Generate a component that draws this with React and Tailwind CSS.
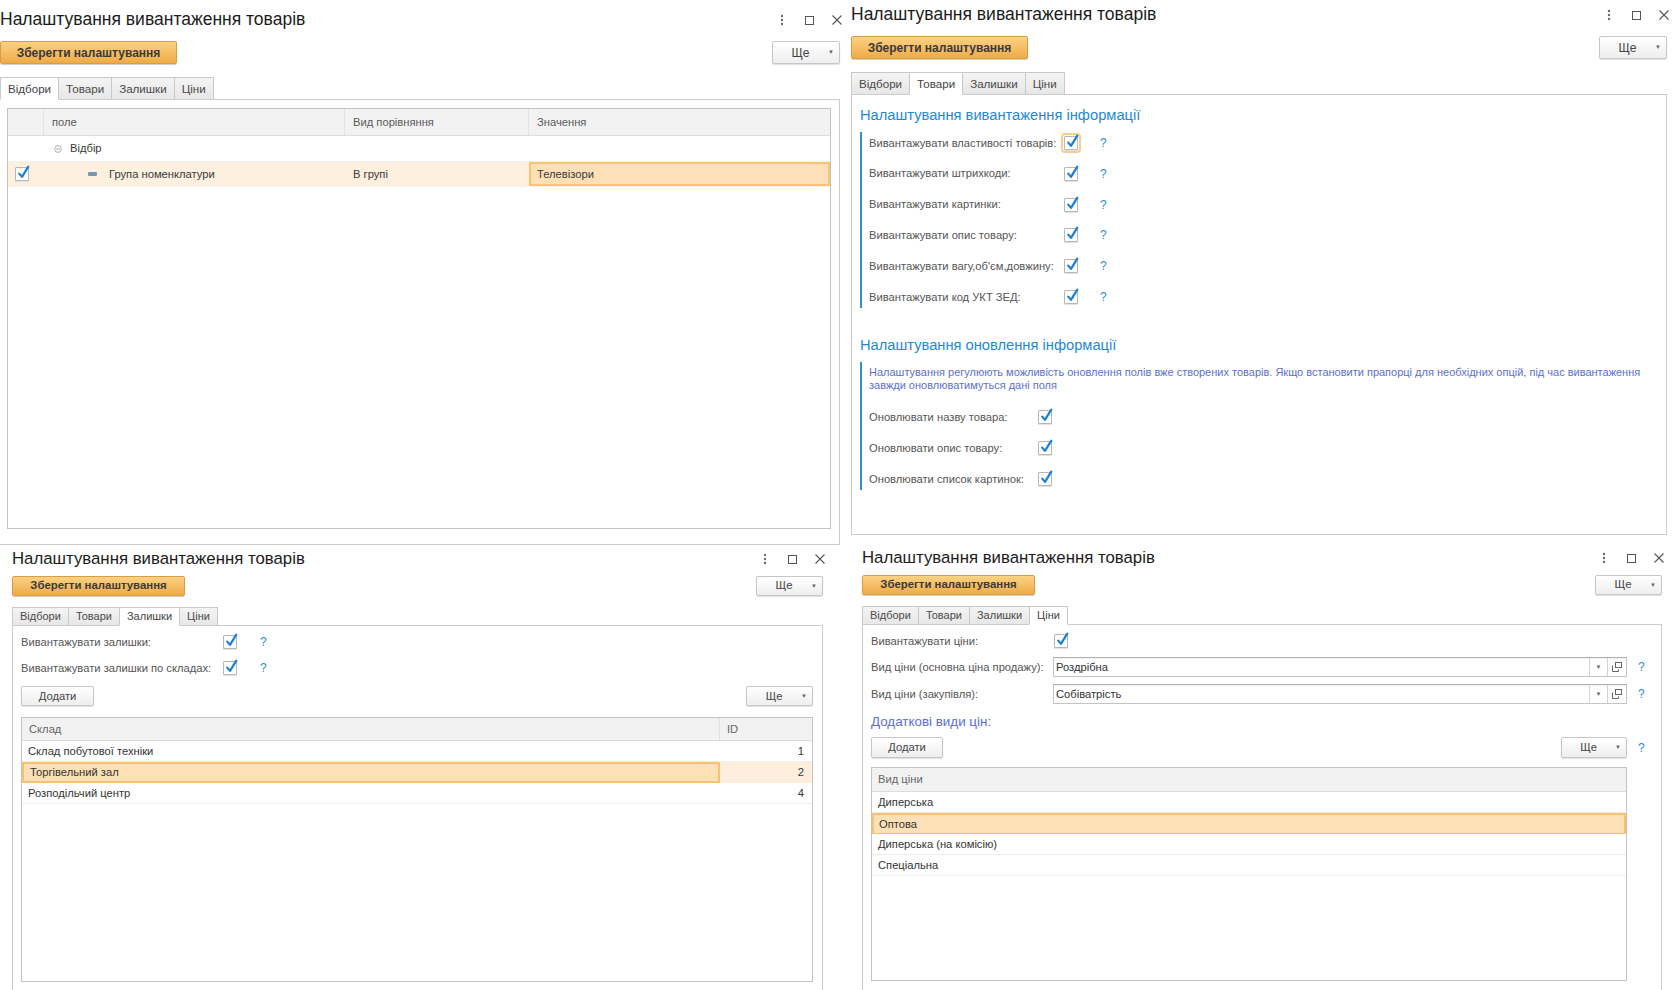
import React from "react";

const TABS = ["Відбори", "Товари", "Залишки", "Ціни"];

function WindowIcons() {
  return (
    <div className="-mr-[2px] flex items-center">
      <svg width="4" height="12" viewBox="0 0 4 12">
        <circle cx="2" cy="2" r="1.2" fill="#6a6a6a" />
        <circle cx="2" cy="6" r="1.2" fill="#6a6a6a" />
        <circle cx="2" cy="10" r="1.2" fill="#6a6a6a" />
      </svg>
      <svg className="ml-[21px]" width="9" height="9" viewBox="0 0 9 9">
        <rect x="0.5" y="0.5" width="8" height="8" fill="none" stroke="#555" />
      </svg>
      <svg className="ml-[18px]" width="10" height="10" viewBox="0 0 10 10">
        <path d="M0.5 0.5L9.5 9.5M9.5 0.5L0.5 9.5" stroke="#555" strokeWidth="1.1" />
      </svg>
    </div>
  );
}

function Check({ focus }) {
  return (
    <span
      className={`relative inline-block h-[14px] w-[14px] shrink-0 rounded-[1px] border border-[#b7b7b7] bg-white shadow-[0_1px_0_#e2e2e2] ${
        focus ? "outline-2 outline-offset-1 outline-[#f5cd8c] outline-solid" : ""
      }`}
    >
      <svg className="absolute left-[1px] top-[-3px]" width="13" height="15" viewBox="0 0 13 15">
        <path
          d="M2.2 8.6L5 11.8L11.3 1.6"
          fill="none"
          stroke="#1b80d3"
          strokeWidth="2.2"
          strokeLinecap="round"
          strokeLinejoin="round"
        />
      </svg>
    </span>
  );
}

function Help({ className = "" }) {
  return <span className={`text-[12px] text-[#2b8bd8] ${className}`}>?</span>;
}

function GrayButton({ children, className = "" }) {
  return (
    <button
      className={`flex items-center justify-center rounded-[2px] border border-[#c6c6c6] bg-linear-to-b from-white to-[#eeeeee] text-[#444] shadow-[0_1px_1px_rgba(0,0,0,0.12)] ${className}`}
    >
      {children}
    </button>
  );
}

function MoreButton({ className = "" }) {
  return (
    <GrayButton className={`pr-[5px] ${className}`}>
      <span className="flex-1 text-center">Ще</span>
      <span className="text-[6px] text-[#666]">▼</span>
    </GrayButton>
  );
}

function Header({ small, active }) {
  return (
    <>
      <div className="flex h-[24px] shrink-0 items-center justify-between">
        <h1 className={`${small ? "text-[16.8px]" : "text-[17.5px]"} font-normal leading-none text-[#1c1c1c]`}>
          Налаштування вивантаження товарів
        </h1>
        <WindowIcons />
      </div>
      <div className={`flex shrink-0 items-center justify-between ${small ? "mt-[5px] h-[20px]" : "mt-[9px] h-[23px]"}`}>
        <button
          className={`h-full rounded-[2px] border border-[#d99d45] bg-linear-to-b from-[#fbd283] to-[#efab46] font-bold text-[#3a3a3a] shadow-[0_1px_1px_rgba(0,0,0,0.2)] ${
            small ? "w-[173px] text-[11.4px]" : "w-[177px] text-[12px]"
          }`}
        >
          Зберегти налаштування
        </button>
        <MoreButton className={small ? "h-full w-[67px] text-[11.4px]" : "h-full w-[68px] text-[12px]"} />
      </div>
      <div className={`flex shrink-0 items-end ${small ? "mt-[10px] h-[19px]" : "mt-[12px] h-[23px]"}`}>
        {TABS.map((t, i) => (
          <div
            key={t}
            className={`-mb-px flex h-full items-center border border-[#c9c9c9] ${i > 0 ? "-ml-px" : ""} ${
              small ? "px-[7px] text-[11px]" : "px-[7px] text-[11.6px]"
            } ${
              i === active
                ? "relative z-10 border-b-white bg-white text-[#444]"
                : "bg-linear-to-b from-[#f4f4f4] to-[#e7e7e7] text-[#4a4a4a]"
            }`}
          >
            {t}
          </div>
        ))}
      </div>
    </>
  );
}

function CircleMinus() {
  return (
    <svg width="8" height="8" viewBox="0 0 8 8">
      <circle cx="4" cy="4" r="3.4" fill="none" stroke="#a5a5a5" strokeWidth="0.9" />
      <path d="M2 4H6" stroke="#a5a5a5" strokeWidth="0.9" />
    </svg>
  );
}

function FiltersPanel() {
  return (
    <div className="flex flex-col pr-[10px] pt-[8px]">
      <Header active={0} />
      <div className="flex-1 border-t border-r border-b border-[#cccccc] pt-[8px] pl-[7px] pr-[8px] pb-[15px]">
        <div className="h-full border border-[#c2c2c2] text-[11.2px] text-[#3a3a3a]">
          <div className="grid h-[27px] grid-cols-[36px_301px_184px_1fr] border-b border-[#dddddd] bg-[#f2f2f2] text-[#5a5a5a]">
            <div className="border-r border-[#e2e2e2]" />
            <div className="flex items-center border-r border-[#e2e2e2] pl-[8px]">поле</div>
            <div className="flex items-center border-r border-[#e2e2e2] pl-[8px]">Вид порівняння</div>
            <div className="flex items-center pl-[8px]">Значення</div>
          </div>
          <div className="flex h-[26px] items-center border-b border-[#f0f0f0] pl-[46px]">
            <CircleMinus />
            <span className="ml-[8px]">Відбір</span>
          </div>
          <div className="grid h-[25px] grid-cols-[36px_301px_184px_1fr] border-b border-[#f3f3f3] bg-[#fdf0de]">
            <div className="flex items-center pl-[7px]">
              <Check />
            </div>
            <div className="flex items-center pl-[44px]">
              <span className="h-[4px] w-[9px] rounded-[1px] bg-[#7795b4]" />
              <span className="ml-[12px]">Група номенклатури</span>
            </div>
            <div className="flex items-center pl-[8px]">В групі</div>
            <div className="flex items-center border-2 border-[#f8c474] bg-[#fde0b7] pl-[6px]">Телевізори</div>
          </div>
        </div>
      </div>
    </div>
  );
}

const EXPORT_ROWS = [
  "Вивантажувати властивості товарів:",
  "Вивантажувати штрихкоди:",
  "Вивантажувати картинки:",
  "Вивантажувати опис товару:",
  "Вивантажувати вагу,об'єм,довжину:",
  "Вивантажувати код УКТ ЗЕД:",
];

const UPDATE_ROWS = ["Оновлювати назву товара:", "Оновлювати опис товару:", "Оновлювати список картинок:"];

function GoodsPanel() {
  return (
    <div className="flex flex-col pl-[1px] pr-[12px] pt-[3px] pb-[10px]">
      <Header active={1} />
      <div className="flex-1 border border-[#cccccc] pt-[10px] pl-[8px] text-[11.2px]">
        <h2 className="text-[14.7px] leading-[20px] text-[#1d8ad7]">Налаштування вивантаження інформації</h2>
        <div className="mt-[7px] flex flex-col gap-[8.8px] border-l-2 border-[#2a90da] pl-[7px]">
          {EXPORT_ROWS.map((r, i) => (
            <div key={r} className="flex h-[22px] items-center">
              <span className="w-[195px] text-[#555]">{r}</span>
              <Check focus={i === 0} />
              <Help className="ml-[22px]" />
            </div>
          ))}
        </div>
        <h2 className="mt-[27px] text-[14.7px] leading-[20px] text-[#1d8ad7]">Налаштування оновлення інформації</h2>
        <div className="mt-[7px] border-l-2 border-[#2a90da] pt-[4px] pl-[7px]">
          <p className="text-[11px] leading-[13.5px] text-[#5b6fd2]">
            Налаштування регулюють можливість оновлення полів вже створених товарів. Якщо встановити прапорці для
            необхідних опцій, під час вивантаження
            <br />
            завжди оновлюватимуться дані поля
          </p>
          <div className="mt-[13px] flex flex-col gap-[9px]">
            {UPDATE_ROWS.map((r) => (
              <div key={r} className="flex h-[22px] items-center">
                <span className="w-[169px] text-[#555]">{r}</span>
                <Check />
              </div>
            ))}
          </div>
        </div>
      </div>
    </div>
  );
}

const STOCKS = [
  ["Склад побутової техніки", "1"],
  ["Торгівельний зал", "2"],
  ["Розподільчий центр", "4"],
];

function StocksPanel() {
  return (
    <div className="flex flex-col pl-[12px] pr-[27px] pt-[2px]">
      <Header small active={2} />
      <div className="-mb-[6px] flex flex-1 flex-col border border-[#cccccc] pt-[6px] pl-[8px] pr-[9px] text-[11.2px]">
        <div className="flex h-[20px] items-center">
          <span className="w-[202px] text-[#555]">Вивантажувати залишки:</span>
          <Check />
          <Help className="ml-[23px]" />
        </div>
        <div className="mt-[6px] flex h-[20px] items-center">
          <span className="w-[202px] text-[#555]">Вивантажувати залишки по складах:</span>
          <Check />
          <Help className="ml-[23px]" />
        </div>
        <div className="mt-[8px] flex h-[20px] items-center justify-between">
          <GrayButton className="h-full w-[73px]">Додати</GrayButton>
          <MoreButton className="h-full w-[67px]" />
        </div>
        <div className="mt-[11px] h-[265px] border border-[#c2c2c2] text-[#333]">
          <div className="grid h-[23px] grid-cols-[698px_1fr] border-b border-[#dddddd] bg-[#f2f2f2] text-[#666]">
            <div className="flex items-center border-r border-[#e0e0e0] pl-[7px]">Склад</div>
            <div className="flex items-center pl-[7px]">ID</div>
          </div>
          {STOCKS.map(([name, id], i) => (
            <div key={name} className="grid h-[21px] grid-cols-[698px_1fr] border-b border-[#ececec]">
              <div
                className={`flex items-center pl-[6px] ${
                  i === 1 ? "border-2 border-[#f8c070] bg-[#fde0b6] pl-[5px]" : ""
                }`}
              >
                {name}
              </div>
              <div className={`flex items-center justify-end pr-[8px] ${i === 1 ? "bg-[#fdefdc]" : ""}`}>{id}</div>
            </div>
          ))}
        </div>
      </div>
    </div>
  );
}

function OpenIcon() {
  return (
    <svg width="10" height="10" viewBox="0 0 10 10">
      <rect x="3.5" y="0.5" width="6" height="5" fill="none" stroke="#666" />
      <path d="M0.5 3.5V9.5H6.5V7.5" fill="none" stroke="#666" />
    </svg>
  );
}

function PriceField({ value }) {
  return (
    <div className="flex h-full w-[574px] border border-[#c4c4c4] border-t-[#b0b0b0] bg-white shadow-[inset_0_1px_1px_rgba(0,0,0,0.06)]">
      <span className="flex flex-1 items-center pl-[2px] text-[#333]">{value}</span>
      <span className="flex w-[18px] items-center justify-center border-l border-[#d4d4d4] text-[6px] text-[#666]">▼</span>
      <span className="flex w-[19px] items-center justify-center border-l border-[#d4d4d4]">
        <OpenIcon />
      </span>
    </div>
  );
}

const PRICES = ["Диперська", "Оптова", "Диперська (на комісію)", "Спеціальна"];

function PricesPanel() {
  return (
    <div className="flex flex-col pl-[12px] pr-[17px] pt-[1px]">
      <Header small active={3} />
      <div className="-mb-[6px] flex flex-1 flex-col border border-[#cccccc] pt-[6px] pl-[8px] text-[11.2px]">
        <div className="flex h-[20px] items-center">
          <span className="w-[183px] text-[#555]">Вивантажувати ціни:</span>
          <Check />
        </div>
        <div className="mt-[6px] flex h-[20px] items-center">
          <span className="w-[182px] text-[#555]">Вид ціни (основна ціна продажу):</span>
          <PriceField value="Роздрібна" />
          <Help className="ml-[11px]" />
        </div>
        <div className="mt-[7px] flex h-[20px] items-center">
          <span className="w-[182px] text-[#555]">Вид ціни (закупівля):</span>
          <PriceField value="Собіватрість" />
          <Help className="ml-[11px]" />
        </div>
        <h3 className="mt-[9px] text-[13.4px] leading-[18px] text-[#5b6fd2]">Додаткові види цін:</h3>
        <div className="mt-[6px] flex h-[21px] items-center">
          <div className="flex h-full w-[756px] justify-between">
            <GrayButton className="h-full w-[72px]">Додати</GrayButton>
            <MoreButton className="h-full w-[66px]" />
          </div>
          <Help className="ml-[11px]" />
        </div>
        <div className="mt-[9px] h-[214px] w-[756px] border border-[#c2c2c2] text-[#333]">
          <div className="flex h-[24px] items-center border-b border-[#dddddd] bg-[#f2f2f2] pl-[6px] text-[#666]">
            Вид ціни
          </div>
          {PRICES.map((p, i) => (
            <div
              key={p}
              className={`flex h-[21px] items-center border-b ${
                i === 1 ? "border-2 border-[#f8c070] bg-[#fde0b6] pl-[5px]" : "border-[#ececec] pl-[6px]"
              }`}
            >
              {p}
            </div>
          ))}
        </div>
      </div>
    </div>
  );
}

export default function App() {
  return (
    <div className="grid h-[990px] w-[1679px] grid-cols-[850px_829px] grid-rows-[545px_445px] overflow-hidden bg-white font-['Liberation_Sans',Arial,sans-serif]">
      <FiltersPanel />
      <GoodsPanel />
      <StocksPanel />
      <PricesPanel />
    </div>
  );
}
